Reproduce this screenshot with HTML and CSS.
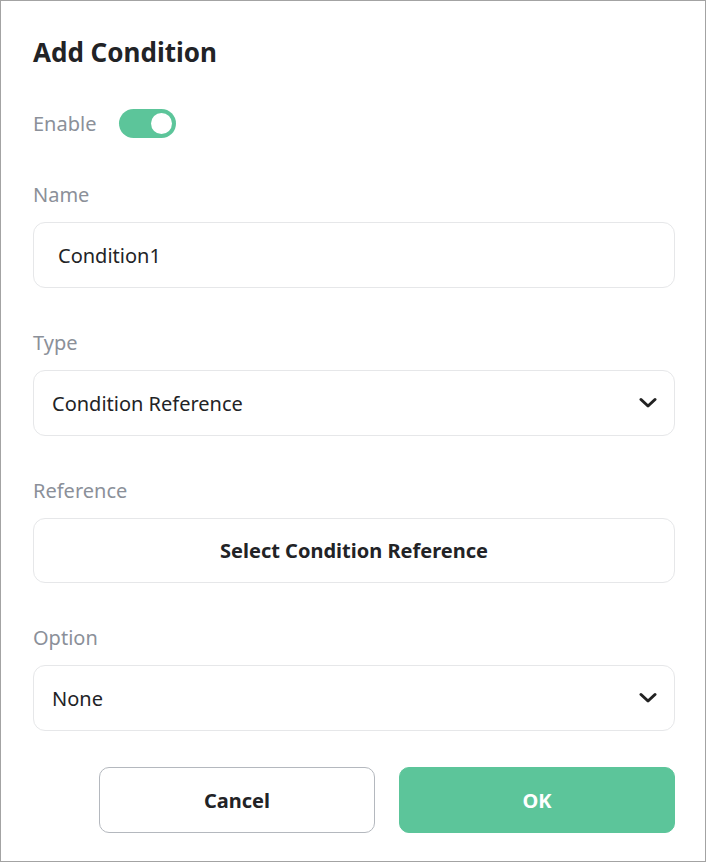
FILE: index.html
```html
<!DOCTYPE html>
<html>
<head>
<meta charset="utf-8">
<link rel="stylesheet" href="styles.css">
</head>
<body>
<div class="dialog">
  <h1 class="title">Add Condition</h1>
  <div class="enable-row">
    <span class="label">Enable</span>
    <span class="toggle"><span class="knob"></span></span>
  </div>
  <div class="field field-first">
    <div class="label">Name</div>
    <div class="box input">Condition1</div>
  </div>
  <div class="field">
    <div class="label">Type</div>
    <div class="box select">
      <span>Condition Reference</span>
      <svg class="chev" width="18" height="12" viewBox="0 0 18 12"><path d="M2 2.5 L9 9 L16 2.5" fill="none" stroke="#222" stroke-width="3" stroke-linecap="round" stroke-linejoin="round"/></svg>
    </div>
  </div>
  <div class="field">
    <div class="label">Reference</div>
    <div class="box refbtn">Select Condition Reference</div>
  </div>
  <div class="field">
    <div class="label">Option</div>
    <div class="box select">
      <span>None</span>
      <svg class="chev" width="18" height="12" viewBox="0 0 18 12"><path d="M2 2.5 L9 9 L16 2.5" fill="none" stroke="#222" stroke-width="3" stroke-linecap="round" stroke-linejoin="round"/></svg>
    </div>
  </div>
  <div class="actions">
    <button class="btn cancel">Cancel</button>
    <button class="btn ok">OK</button>
  </div>
</div>
</body>
</html>
```
FILE: styles.css
```css
html, body {
  margin: 0;
  padding: 0;
  background: #fff;
}
body {
  font-family: "Noto Sans", "Open Sans", sans-serif;
  color: #222326;
}
.dialog {
  box-sizing: border-box;
  width: 706px;
  height: 862px;
  border: 1px solid #a3a3a3;
  padding: 35px 30px 0 32px;
  display: flex;
  flex-direction: column;
}
.title {
  margin: 0;
  font-size: 26px;
  line-height: 32px;
  font-weight: 700;
  color: #222326;
}
.enable-row {
  margin-top: 41px;
  display: flex;
  align-items: center;
  gap: 23px;
  height: 29px;
}
.label {
  font-size: 20px;
  line-height: 26px;
  color: #8b9099;
}
.toggle {
  width: 57px;
  height: 29px;
  border-radius: 15px;
  background: #5cc59a;
  display: flex;
  align-items: center;
  justify-content: flex-end;
  padding-right: 4px;
  box-sizing: border-box;
}
.knob {
  width: 21px;
  height: 21px;
  border-radius: 50%;
  background: #fff;
}
.field {
  margin-top: 42px;
  display: flex;
  flex-direction: column;
  gap: 14px;
}
.field-first {
  margin-top: 44px;
}
.box {
  box-sizing: border-box;
  height: 66px;
  border: 1px solid #e6e7e9;
  border-radius: 12px;
  font-size: 20px;
  display: flex;
  align-items: center;
}
.input {
  padding-left: 24px;
}
.select {
  padding: 0 17px 0 18px;
  justify-content: space-between;
}
.chev {
  display: block;
}
.refbtn {
  justify-content: center;
  font-weight: 700;
  height: 65px;
}
.actions {
  margin-top: 36px;
  display: flex;
  justify-content: flex-end;
  gap: 24px;
}
.btn {
  width: 276px;
  height: 66px;
  border-radius: 10px;
  font-family: inherit;
  font-size: 20px;
  font-weight: 700;
  cursor: pointer;
}
.cancel {
  background: #fff;
  border: 1px solid #b4b8be;
  color: #222326;
}
.ok {
  background: #5cc59a;
  border: 1px solid #5cc59a;
  color: #fff;
}
```
